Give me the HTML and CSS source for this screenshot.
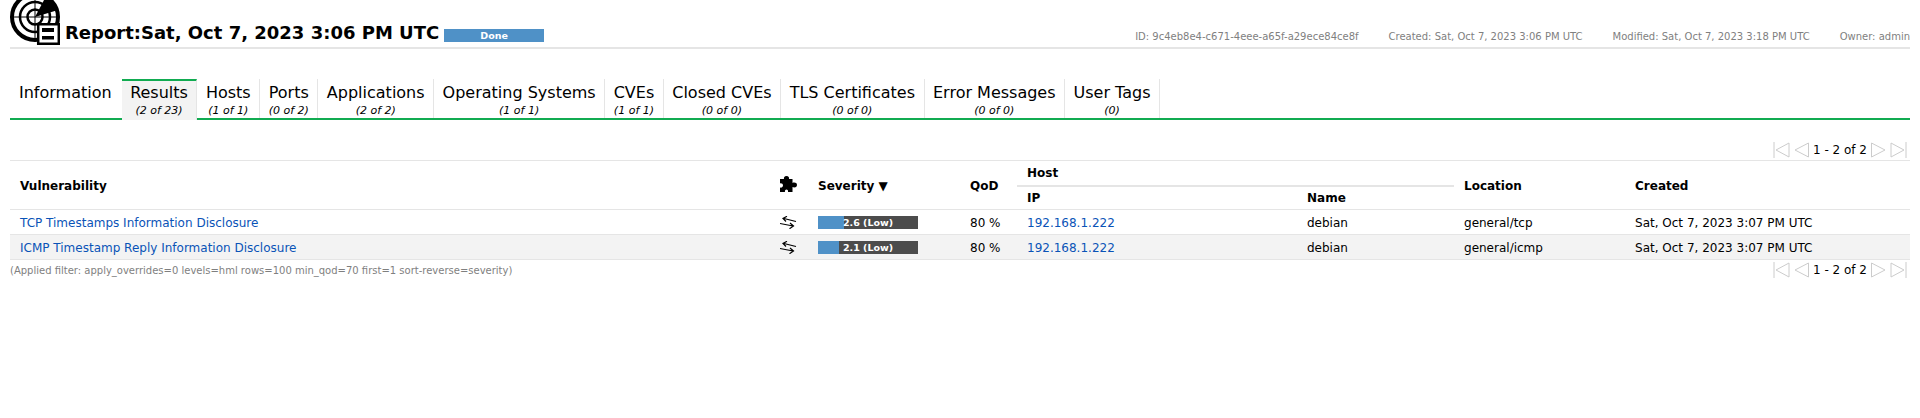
FILE: index.html
```html
<!DOCTYPE html>
<html lang="en">
<head>
  <meta charset="UTF-8">
  <title>Report | Results</title>
  <link rel="stylesheet" href="styles.css">
</head>
<body>
  <div class="report-header">
    <svg class="report-icon" width="50" height="45" viewBox="0 0 50 45">
      <g fill="none" stroke="#000">
        <circle cx="25" cy="17" r="23" stroke-width="4"/>
        <circle cx="25" cy="17" r="15" stroke-width="2.500"/>
        <circle cx="25" cy="17" r="7.500" stroke-width="2.500"/>
        <path d="M0 17H46M25 0V42" stroke-width="1"/>
      </g>
      <path d="M25 17L34 0H39L48 10Z" fill="#000"/>
      <path d="M27 23H50V45H27Z" fill="#fff"/>
      <path d="M28.200 24.200H48.800V43.800H28.200Z" fill="#fff" stroke="#000" stroke-width="2.500"/>
      <path d="M32 28H44V32H32ZM32 36H44V39.500H32Z" fill="#000"/>
    </svg>
    <h1 class="report-title">Report:Sat, Oct 7, 2023 3:06 PM UTC</h1>
    <div class="status-bar">Done</div>
    <div class="report-meta">
      <span>ID: 9c4eb8e4-c671-4eee-a65f-a29ece84ce8f</span>
      <span>Created: Sat, Oct 7, 2023 3:06 PM UTC</span>
      <span>Modified: Sat, Oct 7, 2023 3:18 PM UTC</span>
      <span>Owner: admin</span>
    </div>
  </div>

  <div class="tabs">
    <div class="tab first"><div class="tab-name">Information</div></div>
    <div class="tab active"><div class="tab-name">Results</div><div class="tab-count">(2 of 23)</div></div>
    <div class="tab"><div class="tab-name">Hosts</div><div class="tab-count">(1 of 1)</div></div>
    <div class="tab"><div class="tab-name">Ports</div><div class="tab-count">(0 of 2)</div></div>
    <div class="tab"><div class="tab-name">Applications</div><div class="tab-count">(2 of 2)</div></div>
    <div class="tab"><div class="tab-name">Operating Systems</div><div class="tab-count">(1 of 1)</div></div>
    <div class="tab"><div class="tab-name">CVEs</div><div class="tab-count">(1 of 1)</div></div>
    <div class="tab"><div class="tab-name">Closed CVEs</div><div class="tab-count">(0 of 0)</div></div>
    <div class="tab"><div class="tab-name">TLS Certificates</div><div class="tab-count">(0 of 0)</div></div>
    <div class="tab"><div class="tab-name">Error Messages</div><div class="tab-count">(0 of 0)</div></div>
    <div class="tab"><div class="tab-name">User Tags</div><div class="tab-count">(0)</div></div>
  </div>

  <div class="pager pager-top">
    <svg class="pager-icon" width="17" height="16" viewBox="0 0 17 16"><path d="M1 0V16M16 1V15L3 8Z"/></svg>
    <svg class="pager-icon" width="15" height="16" viewBox="0 0 15 16"><path d="M14.500 1V15L1 8Z"/></svg>
    <span class="pager-text">1 - 2 of 2</span>
    <svg class="pager-icon" width="15" height="16" viewBox="0 0 15 16"><path d="M.5 1V15L14 8Z"/></svg>
    <svg class="pager-icon" width="17" height="16" viewBox="0 0 17 16"><path d="M16 0V16M1 1V15L14 8Z"/></svg>
  </div>

  <table class="results">
    <colgroup>
      <col class="col-vuln"><col class="col-solution"><col class="col-severity"><col class="col-qod">
      <col class="col-ip"><col class="col-name"><col class="col-location"><col class="col-created">
    </colgroup>
    <thead>
      <tr>
        <th rowspan="2" class="head-tall">Vulnerability</th>
        <th rowspan="2" class="cell-icon">
          <svg class="solution-icon" width="17" height="17" viewBox="0 0 17 17"><path d="M0 3H4C3.500 1.500 4.500 0 6.500 0S9.500 1.500 9 3H12.500V7C14 6 17 6.500 17 9S14 12 12.500 11V16H8C8.500 14.500 7.500 13.500 6.500 13.500S4.500 14.500 5 16H0V11.500C1.500 12 3 11 3 9.500S1.500 7 0 7.500Z"/></svg>
        </th>
        <th rowspan="2" class="head-tall">Severity ▼</th>
        <th rowspan="2" class="head-tall">QoD</th>
        <th colspan="2" class="host-head">Host</th>
        <th rowspan="2" class="head-tall">Location</th>
        <th rowspan="2" class="head-tall">Created</th>
      </tr>
      <tr>
        <th class="host-sub">IP</th>
        <th class="host-sub">Name</th>
      </tr>
    </thead>
    <tbody>
      <tr>
        <td><a href="#">TCP Timestamps Information Disclosure</a></td>
        <td class="cell-icon">
          <svg width="17" height="13" viewBox="0 0 17 13"><path class="delta" d="M4 2.500L16 5.500M7 .3L3 2.500L6 5.500M0 7.500L13 10M10 7L13.500 10L9.500 12.700"/></svg>
        </td>
        <td class="cell-severity"><div class="severity"><div class="severity-fill" style="width: 26px"></div><span class="severity-text">2.6 (Low)</span></div></td>
        <td>80 %</td>
        <td><a href="#">192.168.1.222</a></td>
        <td>debian</td>
        <td>general/tcp</td>
        <td>Sat, Oct 7, 2023 3:07 PM UTC</td>
      </tr>
      <tr>
        <td><a href="#">ICMP Timestamp Reply Information Disclosure</a></td>
        <td class="cell-icon">
          <svg width="17" height="13" viewBox="0 0 17 13"><path class="delta" d="M4 2.500L16 5.500M7 .3L3 2.500L6 5.500M0 7.500L13 10M10 7L13.500 10L9.500 12.700"/></svg>
        </td>
        <td class="cell-severity"><div class="severity"><div class="severity-fill" style="width: 21px"></div><span class="severity-text">2.1 (Low)</span></div></td>
        <td>80 %</td>
        <td><a href="#">192.168.1.222</a></td>
        <td>debian</td>
        <td>general/icmp</td>
        <td>Sat, Oct 7, 2023 3:07 PM UTC</td>
      </tr>
    </tbody>
  </table>

  <div class="table-footer">
    <div class="filter-text">(Applied filter: apply_overrides=0 levels=hml rows=100 min_qod=70 first=1 sort-reverse=severity)</div>
    <div class="pager">
      <svg class="pager-icon" width="17" height="16" viewBox="0 0 17 16"><path d="M1 0V16M16 1V15L3 8Z"/></svg>
      <svg class="pager-icon" width="15" height="16" viewBox="0 0 15 16"><path d="M14.500 1V15L1 8Z"/></svg>
      <span class="pager-text">1 - 2 of 2</span>
      <svg class="pager-icon" width="15" height="16" viewBox="0 0 15 16"><path d="M.5 1V15L14 8Z"/></svg>
      <svg class="pager-icon" width="17" height="16" viewBox="0 0 17 16"><path d="M16 0V16M1 1V15L14 8Z"/></svg>
    </div>
  </div>
</body>
</html>
```

FILE: styles.css
```css
body {
  margin: 0;
  padding: 0 10px;
  background: #fff;
  color: #000;
  font-family: "DejaVu Sans", sans-serif;
  font-size: 12px;
}

a {
  color: #0a53b7;
  text-decoration: none;
}

/* report header */
.report-header {
  display: flex;
  align-items: flex-end;
  height: 47px;
  border-bottom: 2px solid #e5e5e5;
}
.report-icon {
  display: block;
  flex: none;
  margin-bottom: 2px;
}
.report-title {
  margin: 0 5px 3px 5px;
  font-size: 18px;
  line-height: 22px;
  font-weight: bold;
}
.status-bar {
  width: 100px;
  height: 13px;
  margin-bottom: 5px;
  background: #4f91c7;
  color: #fff;
  font-size: 9.5px;
  font-weight: bold;
  line-height: 13px;
  text-align: center;
}
.report-meta {
  display: flex;
  gap: 30px;
  margin-left: auto;
  margin-bottom: 4px;
  color: #7f7f7f;
  font-size: 10px;
  line-height: 12px;
}

/* tabs */
.tabs {
  display: flex;
  height: 39px;
  margin-top: 30px;
  border-bottom: 2px solid #11ab51;
}
.tab {
  padding: 3px 8.500px 0;
  border-right: 1px solid #e5e5e5;
  text-align: center;
}
.tab.first {
  border-right: none;
  padding-left: 9px;
  padding-right: 10px;
}
.tab.active {
  box-sizing: border-box;
  height: 41px;
  margin-bottom: -2px;
  border-top: 2px solid #11ab51;
  padding-top: 1px;
  background: #f3f3f3;
}
.tab-name {
  font-size: 16px;
  line-height: 22px;
}
.tab-count {
  font-size: 11px;
  font-style: italic;
  line-height: 14px;
}

/* pagination */
.pager {
  display: flex;
  justify-content: flex-end;
  align-items: center;
  gap: 4px;
  padding-right: 3px;
}
.pager-top {
  margin-top: 22px;
  margin-bottom: 2px;
}
.pager-icon {
  display: block;
  fill: none;
  stroke: #ccc;
  stroke-width: 1;
}
.pager-text {
  font-size: 12px;
}

/* results table */
.results {
  width: 100%;
  table-layout: fixed;
  border-collapse: collapse;
  border-top: 1px solid #e5e5e5;
}
.col-vuln { width: 758px; }
.col-solution { width: 40px; }
.col-severity { width: 152px; }
.col-qod { width: 57px; }
.col-ip { width: 280px; }
.col-name { width: 157px; }
.col-location { width: 171px; }
.results th,
.results td {
  box-sizing: border-box;
  padding: 0 10px;
  text-align: left;
  white-space: nowrap;
}
.results th {
  height: 24px;
  font-weight: bold;
}
.results thead {
  border-bottom: 1px solid #e5e5e5;
}
.results th.head-tall {
  padding-top: 2px;
}
.results th.host-head {
  height: 25px;
  border-bottom: 2px solid #e5e5e5;
}
.results th.host-sub {
  padding-top: 1px;
}
.results td {
  height: 25px;
  padding-top: 2px;
  border-bottom: 1px solid #e5e5e5;
}
.results td.cell-severity {
  padding-top: 0;
}
.results tbody tr:nth-child(even) {
  background: #f3f3f3;
}
.results .cell-icon,
.results td.cell-icon {
  padding: 0;
  text-align: center;
  line-height: 0;
}
.solution-icon {
  margin-top: -2px;
}
.delta {
  fill: none;
  stroke: #000;
  stroke-width: 1.200;
}

/* severity bar */
.severity {
  position: relative;
  width: 100px;
  height: 13px;
  background: #4c4c4c;
}
.severity-fill {
  height: 13px;
  background: #4f91c7;
}
.severity-text {
  position: absolute;
  top: 0;
  left: 0;
  right: 0;
  color: #fff;
  font-size: 9.500px;
  font-weight: bold;
  line-height: 13px;
  text-align: center;
}

/* below the table */
.table-footer {
  display: flex;
  justify-content: space-between;
  align-items: center;
  margin-top: 2px;
}
.filter-text {
  color: #7f7f7f;
  font-size: 10px;
}
```
